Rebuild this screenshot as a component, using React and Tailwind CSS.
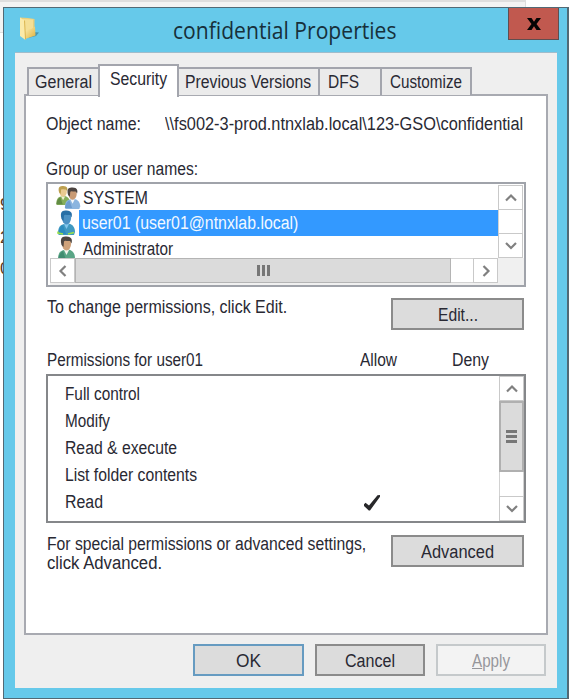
import { useLayoutEffect, useRef } from "react";

/* Single line of text condensed or widened to an exact width. */
function Fit({ w, children, className = "" }) {
  const ref = useRef(null);
  useLayoutEffect(() => {
    const el = ref.current;
    el.style.transform = `scaleX(${w / el.offsetWidth})`;
  }, [w]);
  return (
    <span className={`block h-5 shrink-0 text-[18px] leading-[21px] ${className}`} style={{ width: w }}>
      <span ref={ref} className="inline-block origin-left whitespace-nowrap">
        {children}
      </span>
    </span>
  );
}

function Chevron({ dir }) {
  const d = {
    up: "M3 10.5 8 5.5 13 10.5",
    down: "M3 5 8 10 13 5",
    left: "M10.5 3 5.5 8 10.5 13",
    right: "M5.5 3 10.5 8 5.5 13",
  }[dir];
  return (
    <svg viewBox="0 0 16 16" className="size-4" fill="none" stroke="#808080" strokeWidth="2.2">
      <path d={d} />
    </svg>
  );
}

function ScrollButton({ dir, className = "" }) {
  return (
    <div className={`flex shrink-0 items-center justify-center border border-[#c9c9c9] bg-white ${className}`}>
      <Chevron dir={dir} />
    </div>
  );
}

function Folder() {
  return (
    <svg width="22" height="26" viewBox="0 0 22 26" className="shrink-0">
      <defs>
        <linearGradient id="front" x1="0" y1="0" x2="1" y2="1">
          <stop offset="0" stopColor="#fbeeb4" />
          <stop offset="1" stopColor="#dfb23c" />
        </linearGradient>
      </defs>
      <path d="M14 16 20 16.5 17 20 9 22Z" fill="#3d7f95" opacity=".7" />
      <path d="M1 1.5 9 2 15.5 3V19L6 20Z" fill="#e9cf7d" />
      <path d="M4 3 14 3.5V18L5 21Z" fill="#f5df95" />
      <path d="M6 14 12 13 16 10.5 16.5 19.5 6 23Z" fill="url(#front)" />
      <path d="M1 1.5 5.5 4.5 6.5 24 1 20Z" fill="#fbeaa9" />
      <path d="M5.5 4.5 6.5 23.5" stroke="#d3a93e" strokeWidth=".8" />
    </svg>
  );
}

function Person({ hair, skin, coat, shade, accent }) {
  return (
    <g>
      <path d="M1 24C1 17 3 15 7 14L11 13.5C16 14 18 18 18 22L17 25H2Z" fill={coat} />
      <path d="M1 24Q2 17 6 15L9 24Z" fill={shade} opacity=".7" />
      <path d="M7 14 9.5 19 12 14Z" fill={accent} />
      <ellipse cx="9.5" cy="8" rx="4.6" ry="6.5" fill={skin} />
      <path d="M4.5 9C2.5 1 6 .5 9.5 .5C15 .7 15.5 4 14.5 7.5L13 5C10 5.5 8 4 7 5.5L6.5 11Z" fill={hair} />
    </g>
  );
}

function GroupIcon() {
  return (
    <svg width="26" height="25" viewBox="0 0 26 25" className="shrink-0">
      <g transform="translate(.5,.5) scale(.8,.78)">
        <Person hair="#bda050" skin="#e9ca91" coat="#86ae5a" shade="#527d3b" accent="#eef2d2" />
      </g>
      <g transform="translate(9,2) scale(.9,.88)">
        <Person hair="#4c4440" skin="#c99b74" coat="#8bb5df" shade="#6092c8" accent="#f4f7fa" />
      </g>
    </svg>
  );
}

function UserIcon({ selected }) {
  return (
    <svg width="19" height="25" viewBox="0 0 19 25" className="shrink-0">
      {selected ? (
        <>
          <Person hair="#276fa6" skin="#4b91c4" coat="#4099c1" shade="#2386bd" accent="#82c6ed" />
          <path d="M1 21.5v1.5l5 1M11 24l6-1.5" stroke="#9be04a" strokeWidth="1.6" fill="none" />
        </>
      ) : (
        <Person hair="#4f4742" skin="#d0a27a" coat="#5aa586" shade="#348267" accent="#f3f6ef" />
      )}
    </svg>
  );
}

function Button({ className, children }) {
  return (
    <div className={`flex shrink-0 justify-center border-2 ${className}`}>{children}</div>
  );
}

const permissions = [
  ["Full control", 75],
  ["Modify", 45],
  ["Read & execute", 112],
  ["List folder contents", 132],
  ["Read", 38, true],
];

export default function App() {
  return (
    <div className="relative flex h-[700px] w-[570px] overflow-hidden bg-white font-['Liberation_Sans',Arial,sans-serif] text-[#292933]">
      <div className="absolute left-0 top-0 h-[33px] w-[526px] border-b border-r border-t-2 border-[#dedede] bg-[#f3f3f3]" />
      <div className="w-[3px] shrink-0 pt-[195px] text-[17px] text-[#5a3a20]">
        <div className="h-[33px] leading-5">9</div>
        <div className="h-[31px] leading-5">2</div>
        <div className="h-8 leading-5">0</div>
      </div>

      <div className="relative mt-[7px] flex h-[692px] w-[566px] shrink-0 flex-col border-[1.5px] border-r-2 border-[#526975] bg-[#66c9ea]">
        <header className="flex h-11 shrink-0">
          <div className="ml-[15px] mt-[8px]">
            <Folder />
          </div>
          <div className="ml-[132px] mt-[7px]">
            <Fit w={224} className="font-['Open_Sans','Noto_Sans',sans-serif] !text-[23px] !leading-[30px] text-[#17303b]">
              confidential Properties
            </Fit>
          </div>
          <div className="ml-[111px] flex h-8 w-[51px] items-center justify-center border-[1.5px] border-t-0 border-[#5f4e50] bg-[#c1594f]">
            <svg width="14" height="12" viewBox="0 0 14 12" fill="#060404">
              <path d="M0 0H4.5L7 3.7 9.5 0H14L9.5 6 14 12H9.5L7 8.3 4.5 12H0L4.5 6Z" />
            </svg>
          </div>
        </header>

        <main className="ml-[11px] flex h-[636px] w-[542px] shrink-0 flex-col border-t border-[#a0bccb] bg-[#efefef]">
          <nav className="z-10 ml-3 mt-[11px] flex h-[33px] shrink-0 items-end">
            <div className="mb-[2px] h-7 w-[71px] border-2 border-b-0 border-r-0 border-[#a3a5ad] bg-[#ebebeb] pl-1.5 pt-[3px]">
              <Fit w={57}>General</Fit>
            </div>
            <div className="h-[33px] w-[81px] border-2 border-b-0 border-[#a3a5ad] bg-white pl-[10px] pt-[3px]">
              <Fit w={57}>Security</Fit>
            </div>
            <div className="mb-[2px] h-7 w-[141px] border-2 border-b-0 border-l-0 border-[#a3a5ad] bg-[#ebebeb] pl-[6px] pt-[3px]">
              <Fit w={126}>Previous Versions</Fit>
            </div>
            <div className="mb-[2px] h-7 w-[62px] border-2 border-b-0 border-l-0 border-[#a3a5ad] bg-[#ebebeb] pl-[8px] pt-[3px]">
              <Fit w={31}>DFS</Fit>
            </div>
            <div className="mb-[2px] h-7 w-[90px] border-2 border-b-0 border-l-0 border-[#a3a5ad] bg-[#ebebeb] pl-[8px] pt-[3px]">
              <Fit w={72}>Customize</Fit>
            </div>
          </nav>

          <section className="-mt-[3px] ml-[9px] flex h-[541px] w-[524px] shrink-0 flex-col border-2 border-[#a8aab1] bg-white pl-5">
            <div className="mt-[18px] flex h-5 shrink-0 gap-[24px]">
              <Fit w={95}>Object name:</Fit>
              <Fit w={358}>\\fs002-3-prod.ntnxlab.local\123-GSO\confidential</Fit>
            </div>
            <div className="mt-[25px] h-5 shrink-0">
              <Fit w={152}>Group or user names:</Fit>
            </div>

            <div className="mt-[3px] flex h-[105px] w-[480px] shrink-0 flex-col border-2 border-[#a0a3aa] bg-white pl-[2px] pt-[1px]">
              <div className="flex h-[73px] shrink-0">
                <div className="flex w-[448px] flex-col overflow-hidden">
                  <div className="flex h-[25px] shrink-0 pl-[5px]">
                    <GroupIcon />
                    <Fit w={65} className="ml-[2px] mt-[3px]">SYSTEM</Fit>
                  </div>
                  <div className="flex h-[26px] shrink-0 pl-[7px]">
                    <UserIcon selected />
                    <div className="ml-[3px] flex-1 bg-[#3399ff] pl-[3px] pt-[3px] text-[#f2f8ff]">
                      <Fit w={216}>user01 (user01@ntnxlab.local)</Fit>
                    </div>
                  </div>
                  <div className="flex h-[24px] shrink-0 pl-[7px]">
                    <UserIcon />
                    <Fit w={90} className="ml-[7px] mt-[3px]">Administrator</Fit>
                  </div>
                </div>
                <div className="flex w-[25px] flex-col bg-white">
                  <ScrollButton dir="up" className="h-[25px]" />
                  <div className="flex-1 border-x border-[#d2d2d2]" />
                  <ScrollButton dir="down" className="h-[25px]" />
                </div>
              </div>
              <div className="flex h-[27px] shrink-0 bg-[#f0f0f0] pb-[2px]">
                <ScrollButton dir="left" className="w-[25px]" />
                <div className="flex w-[376px] items-center justify-center gap-[2px] border border-[#b4b4b4] bg-[#dbdbdb]">
                  <i className="h-[11px] w-[3px] bg-[#777]" />
                  <i className="h-[11px] w-[3px] bg-[#777]" />
                  <i className="h-[11px] w-[3px] bg-[#777]" />
                </div>
                <div className="w-[22px] border-y border-[#d2d2d2] bg-white" />
                <ScrollButton dir="right" className="w-[25px]" />
              </div>
            </div>

            <div className="flex h-[63px] shrink-0 pt-[10px]">
              <div className="ml-px w-[344px]">
                <Fit w={240}>To change permissions, click Edit.</Fit>
              </div>
              <Button className="mt-[1px] h-8 w-[133px] border-[#8b8b8b] bg-[#dcdcdc] pt-[5px]">
                <Fit w={40}>Edit...</Fit>
              </Button>
            </div>

            <div className="ml-px flex h-6 shrink-0">
              <Fit w={156}>Permissions for user01</Fit>
              <Fit w={37} className="ml-[157px]">Allow</Fit>
              <Fit w={37} className="ml-[55px]">Deny</Fit>
            </div>

            <div className="flex h-[149px] w-[480px] shrink-0 border-2 border-[#85878a] bg-white">
              <div className="flex w-[451px] flex-col pt-[8px]">
                {permissions.map(([name, w, allowed]) => (
                  <div key={name} className="flex h-[27px] shrink-0 pl-[17px]">
                    <Fit w={w}>{name}</Fit>
                    {allowed && (
                      <svg width="20" height="18" viewBox="0 0 20 18" className="ml-[259px] mt-[2px]">
                        <path d="M2 10.2 3.5 8.7 7 11.5 15.5 1.2 18 1 18 2.8 8 16.5 6.8 16.5 2 12Z" fill="#28282a" />
                      </svg>
                    )}
                  </div>
                ))}
              </div>
              <div className="flex w-[25px] flex-col">
                <ScrollButton dir="up" className="h-[25px]" />
                <div className="flex h-[71px] shrink-0 flex-col items-center justify-center gap-[2px] border-2 border-[#b0b0b0] bg-[#dbdbdb]">
                  <i className="h-[3px] w-[11px] bg-[#777]" />
                  <i className="h-[3px] w-[11px] bg-[#777]" />
                  <i className="h-[3px] w-[11px] bg-[#777]" />
                </div>
                <div className="flex-1 border-x border-[#d2d2d2] bg-white" />
                <ScrollButton dir="down" className="h-[25px]" />
              </div>
            </div>

            <div className="flex pt-[11px]">
              <div className="ml-px w-[344px]">
                <Fit w={319}>For special permissions or advanced settings,</Fit>
                <Fit w={115} className="-mt-[1px]">click Advanced.</Fit>
              </div>
              <Button className="mt-[1px] h-8 w-[133px] border-[#8b8b8b] bg-[#dcdcdc] pt-[5px]">
                <Fit w={73}>Advanced</Fit>
              </Button>
            </div>
          </section>

          <footer className="ml-[178px] mt-[9px] flex gap-[11px]">
            <Button className="h-8 w-[111px] border-[#669bc1] bg-[#dcdcdc] pt-[5px]">
              <Fit w={25}>OK</Fit>
            </Button>
            <Button className="h-8 w-[110px] border-[#8b8b8b] bg-[#dcdcdc] pt-[5px]">
              <Fit w={50}>Cancel</Fit>
            </Button>
            <Button className="h-8 w-[110px] border-[#c5c9cb] bg-[#f3f3f3] pt-[5px] text-[#96969b]">
              <Fit w={38}>
                <u>A</u>pply
              </Fit>
            </Button>
          </footer>
        </main>
      </div>
    </div>
  );
}
